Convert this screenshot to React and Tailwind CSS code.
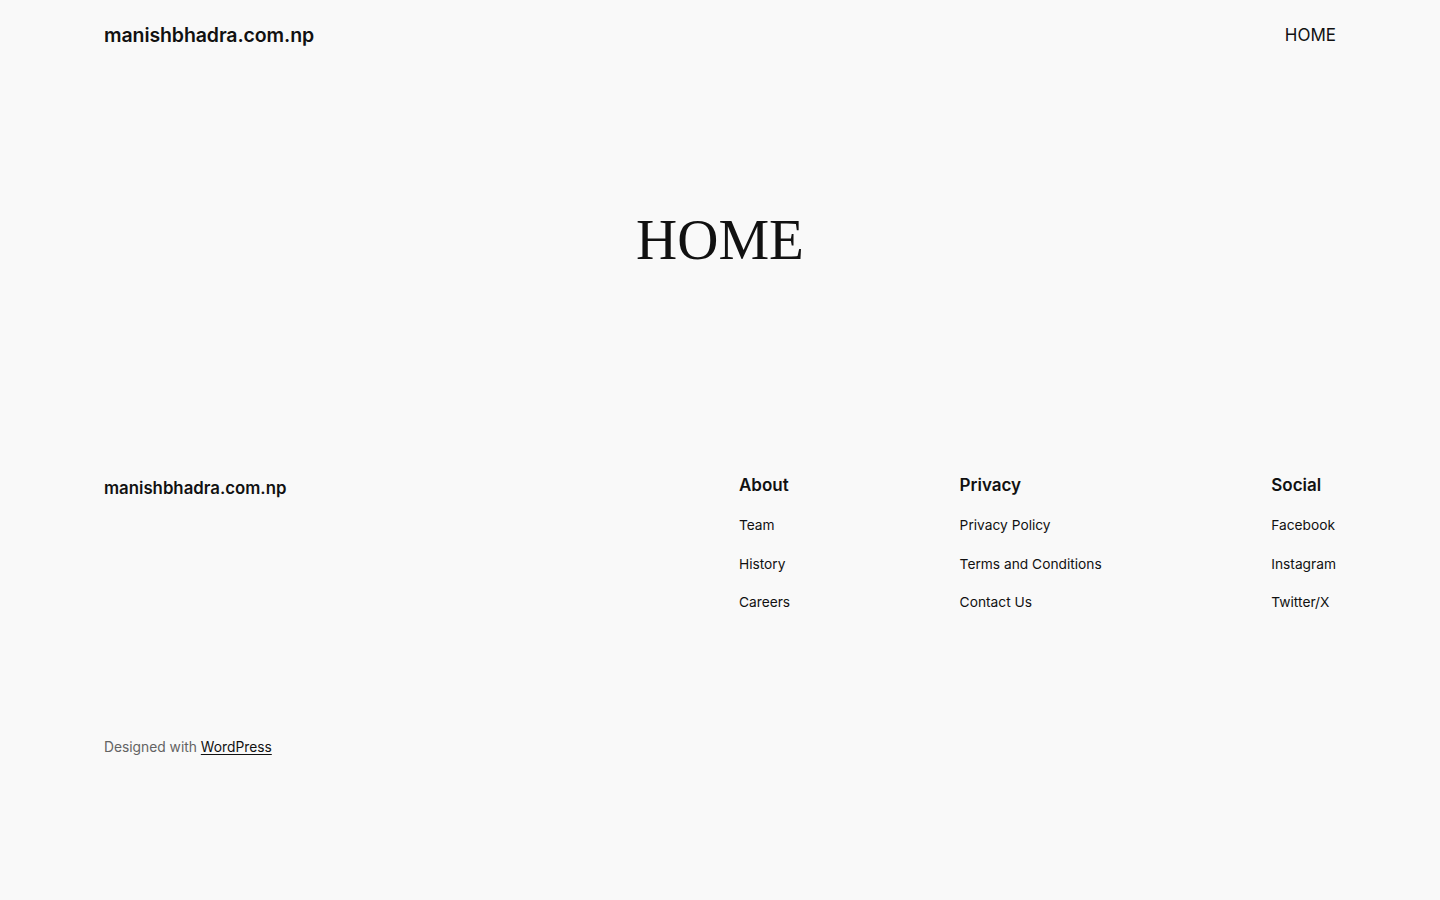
import React from 'react'

const footerColumns = [
  { title: 'About', links: ['Team', 'History', 'Careers'] },
  { title: 'Privacy', links: ['Privacy Policy', 'Terms and Conditions', 'Contact Us'] },
  { title: 'Social', links: ['Facebook', 'Instagram', 'Twitter/X'] },
]

const FooterColumn = ({ title, links }) => (
  <div className="flex flex-col">
    <h2 className="text-[17px] font-semibold leading-[24px] text-[#111111]">{title}</h2>
    <ul className="mt-[18px] flex flex-col gap-[18.5px]">
      {links.map((link) => (
        <li key={link} className="text-[13.75px] leading-[20px]">
          <a href="#" className="text-[#111111]">
            {link}
          </a>
        </li>
      ))}
    </ul>
  </div>
)

export default function App() {
  return (
    <div className="min-h-[900px] bg-[#f9f9f9] text-[#111111] [font-family:Inter,'Noto_Sans',sans-serif]">
      <header className="mx-[104px] flex h-[70px] items-center justify-between">
        <a href="#" className="text-[19.5px] font-semibold leading-[28px] tracking-[-0.1px]">
          manishbhadra.com.np
        </a>
        <nav>
          <a href="#" className="text-[17px] leading-[28px]">HOME</a>
        </nav>
      </header>

      <main className="pt-[134px]">
        <h1 className="text-center text-[57px] leading-[72px] [font-family:'Liberation_Serif',serif]">
          HOME
        </h1>
      </main>

      <footer className="mx-[104px] pt-[197px]">
        <div className="flex items-start justify-between">
          <a href="#" className="mt-[3px] text-[16.8px] font-semibold leading-[24px]">
            manishbhadra.com.np
          </a>
          <div className="flex gap-[169.5px]">
            {footerColumns.map((column) => (
              <FooterColumn key={column.title} title={column.title} links={column.links} />
            ))}
          </div>
        </div>
        <p className="mt-[125px] text-[13.8px] leading-[20px] text-[#636363]">
          Designed with{' '}
          <a href="#" className="text-[#111111] underline underline-offset-2">
            WordPress
          </a>
        </p>
      </footer>
    </div>
  )
}
